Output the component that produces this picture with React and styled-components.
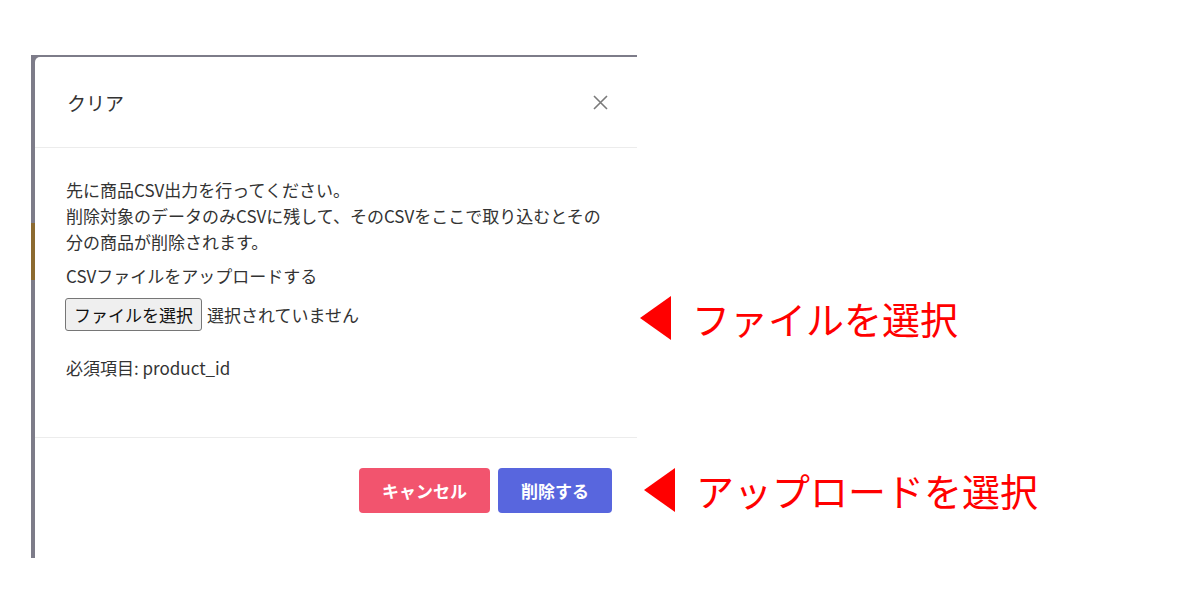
import React from 'react'
import styled, { createGlobalStyle } from 'styled-components'

const GlobalStyle = createGlobalStyle`
  body {
    margin: 0;
    background: #ffffff;
    font-family: "Noto Sans CJK JP", "Noto Sans", sans-serif;
  }
`

const Canvas = styled.div`
  position: relative;
  width: 1200px;
  height: 612px;
  overflow: hidden;
  background: #ffffff;
`

const Shot = styled.div`
  display: flex;
  box-sizing: border-box;
  width: 606px;
  height: 503px;
  margin: 55px 0 0 31px;
  padding-top: 2px;
  background: #7d7c89;
  overflow: hidden;
`

const Edge = styled.div`
  display: flex;
  flex-direction: column;
  width: 4px;
  flex-shrink: 0;
`

const Peek = styled.div`
  height: 57px;
  margin-top: 166px;
  background: #8c6a30;
`

const Modal = styled.div`
  flex: 1;
  display: flex;
  flex-direction: column;
  background: #ffffff;
  border-top-left-radius: 5px;
  color: #333333;
`

const Header = styled.div`
  display: flex;
  align-items: center;
  justify-content: space-between;
  height: 90px;
  padding: 0 29px 0 32px;
  border-bottom: 1px solid #ececec;
`

const Title = styled.h2`
  margin: 0;
  font-size: 19px;
  font-weight: 400;
  color: #333333;
`

const Close = styled.button`
  display: flex;
  padding: 0;
  border: 0;
  background: none;
  cursor: pointer;
`

const Body = styled.div`
  padding: 29px 28px 56px 31px;
  font-size: 17px;
  line-height: 26px;
`

const Text = styled.p`
  margin: ${(p) => p.$top || 0}px 0 0;
`

const FileRow = styled.div`
  display: flex;
  align-items: center;
  gap: 5px;
  margin-top: 9px;
`

const FileButton = styled.button`
  box-sizing: border-box;
  height: 33px;
  margin-left: -1px;
  padding: 0 8px;
  border: 1px solid #767676;
  border-radius: 3px;
  background: #efefef;
  font-family: inherit;
  font-size: 17px;
  color: #111111;
`

const Footer = styled.div`
  display: flex;
  justify-content: flex-end;
  gap: 8px;
  padding: 30px 25px 0;
  border-top: 1px solid #ececec;
  flex: 1;
`

const Action = styled.button`
  height: 45px;
  padding: 0 23px;
  border: 0;
  border-radius: 4px;
  background: ${(p) => (p.$danger ? '#f2546e' : '#5866de')};
  color: #ffffff;
  font-family: inherit;
  font-size: 17px;
  font-weight: 700;
`

const Callout = styled.div`
  position: absolute;
  top: ${(p) => p.$top}px;
  left: ${(p) => p.$left}px;
  display: flex;
  align-items: center;
  gap: 21px;
  color: #ff0000;
  font-size: 38px;
  line-height: 44px;
`

const Arrow = styled.span`
  width: 0;
  height: 0;
  border-top: 22px solid transparent;
  border-bottom: 22px solid transparent;
  border-right: 31px solid #ff0000;
`

export default function App() {
  return (
    <>
      <GlobalStyle />
      <Canvas>
        <Shot>
          <Edge>
            <Peek />
          </Edge>
          <Modal>
            <Header>
              <Title>クリア</Title>
              <Close aria-label="close">
                <svg width="15" height="15" viewBox="0 0 15 15">
                  <path
                    d="M1 1L14 14M14 1L1 14"
                    stroke="#7a7a7a"
                    strokeWidth="1.6"
                    fill="none"
                  />
                </svg>
              </Close>
            </Header>
            <Body>
              <Text>
                先に商品CSV出力を行ってください。
                <br />
                削除対象のデータのみCSVに残して、そのCSVをここで取り込むとその分の商品が削除されます。
              </Text>
              <Text $top={8}>CSVファイルをアップロードする</Text>
              <FileRow>
                <FileButton>ファイルを選択</FileButton>
                <span>選択されていません</span>
              </FileRow>
              <Text $top={24}>必須項目: product_id</Text>
            </Body>
            <Footer>
              <Action $danger>キャンセル</Action>
              <Action>削除する</Action>
            </Footer>
          </Modal>
        </Shot>
        <Callout $top={296} $left={640}>
          <Arrow />
          ファイルを選択
        </Callout>
        <Callout $top={468} $left={644}>
          <Arrow />
          アップロードを選択
        </Callout>
      </Canvas>
    </>
  )
}
